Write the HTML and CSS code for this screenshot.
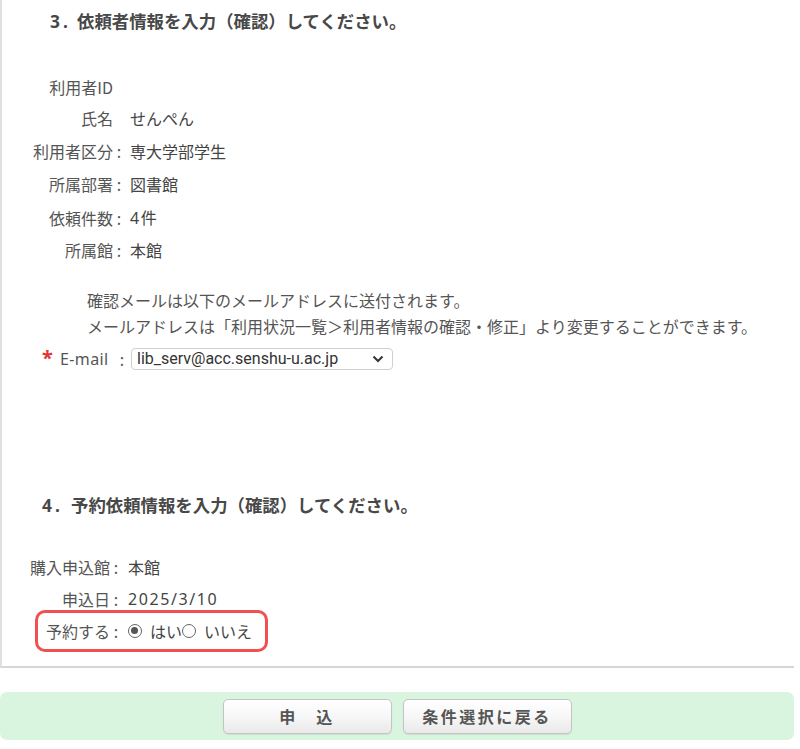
FILE: index.html
```html
<!DOCTYPE html>
<html lang="ja">
<head>
<meta charset="utf-8">
<title>予約依頼</title>
<link rel="stylesheet" href="styles.css">
</head>
<body>
<div class="panel">
  <h2 class="heading heading-3"><span class="hnum">3.</span>依頼者情報を入力（確認）してください。</h2>
  <div class="info info-3">
    <div class="row row-first"><span class="label">利用者ID</span><span class="colon"></span><span class="value"></span></div>
    <div class="row"><span class="label">氏名</span><span class="colon"></span><span class="value">せんぺん</span></div>
    <div class="row"><span class="label">利用者区分</span><span class="colon">:</span><span class="value">専大学部学生</span></div>
    <div class="row"><span class="label">所属部署</span><span class="colon">:</span><span class="value">図書館</span></div>
    <div class="row"><span class="label">依頼件数</span><span class="colon">:</span><span class="value"><span class="num">4</span>件</span></div>
    <div class="row"><span class="label">所属館</span><span class="colon">:</span><span class="value">本館</span></div>
  </div>
  <div class="notes">
    <p>確認メールは以下のメールアドレスに送付されます。</p>
    <p>メールアドレスは「利用状況一覧＞利用者情報の確認・修正」より変更することができます。</p>
  </div>
  <div class="email-row">
    <span class="req">*</span>
    <span class="email-label">E-mail</span>
    <span class="email-colon">:</span>
    <div class="select" role="listbox">
      <span class="select-text">lib_serv@acc.senshu-u.ac.jp</span>
      <svg class="chevron" width="12" height="8" viewBox="0 0 12 8"><path d="M1.5 1.5 L6 6 L10.5 1.5" fill="none" stroke="#333" stroke-width="2"/></svg>
    </div>
  </div>

  <h2 class="heading heading-4"><span class="hnum">4.</span>予約依頼情報を入力（確認）してください。</h2>
  <div class="info info-4">
    <div class="row"><span class="label">購入申込館</span><span class="colon">:</span><span class="value">本館</span></div>
    <div class="row"><span class="label">申込日</span><span class="colon">:</span><span class="value num">2025/3/10</span></div>
    <div class="row row-reserve">
      <span class="label">予約する</span><span class="colon">:</span>
      <span class="value radios">
        <span class="radio checked"></span><span class="radio-text">はい</span><span class="radio"></span><span class="radio-text">いいえ</span>
      </span>
      <span class="highlight"></span>
    </div>
  </div>
</div>
<div class="actions">
  <button class="btn" type="button">申　込</button>
  <button class="btn" type="button">条件選択に戻る</button>
</div>
</body>
</html>
```

FILE: styles.css
```css
html, body {
  margin: 0;
  padding: 0;
  background: #fff;
}
body {
  font-family: "Noto Sans CJK JP", "Noto Sans", sans-serif;
  font-size: 16px;
  color: #555;
  width: 800px;
}
.panel {
  width: 792px;
  border-left: 2px solid #e0e0e0;
  border-bottom: 2px solid #d6d6d6;
  padding-top: 9px;
  padding-bottom: 19px;
}
.heading {
  margin: 0;
  font-size: 17.4px;
  line-height: 24px;
  font-weight: bold;
  color: #484848;
}
.hnum {
  font-family: "Noto Sans", sans-serif;
  letter-spacing: 3px;
  display: inline-block;
}
.heading-3 { padding-left: 48px; }
.heading-3 .hnum { width: 27px; }
.heading-4 { padding-left: 40px; margin-top: 123px; }
.heading-4 .hnum { width: 29px; }

.info-3 { margin-top: 39px; }
.info-4 { margin-top: 34px; }

.row {
  display: grid;
  grid-template-columns: 111px 12px auto;
  height: 33px;
  line-height: 33px;
  align-items: center;
}
.row-first { height: 30px; line-height: 30px; }
.info-4 .row {
  grid-template-columns: 108px 12px auto;
  height: 32px;
  line-height: 32px;
}
.label {
  text-align: right;
  color: #555;
}
.colon {
  text-align: center;
  color: #555;
}
.value {
  padding-left: 5px;
  color: #444;
}
.info-4 .value { padding-left: 6px; }
.num {
  font-family: "Noto Sans", sans-serif;
  letter-spacing: 1.6px;
}

.notes {
  margin-top: 20px;
  padding-left: 85px;
}
.notes p {
  margin: 0;
  line-height: 26px;
  color: #555;
}

.email-row {
  display: flex;
  align-items: center;
  margin-top: 8px;
  padding-left: 40px;
  height: 23px;
}
.req {
  color: #e53333;
  font-family: "Noto Sans", sans-serif;
  font-weight: bold;
  font-size: 20px;
  line-height: 20px;
  align-self: flex-start;
  margin-top: 1px;
  width: 18px;
}
.email-label {
  font-family: "Noto Sans", sans-serif;
  font-size: 16px;
  color: #555;
  letter-spacing: 0.4px;
  width: 53px;
}
.email-colon {
  width: 18px;
  text-align: center;
  color: #555;
}
.select {
  box-sizing: border-box;
  width: 262px;
  height: 22px;
  border: 1px solid #cfcfcf;
  border-radius: 4px;
  display: flex;
  align-items: center;
  justify-content: space-between;
  padding: 0 8px 0 5px;
  background: #fff;
}
.select-text {
  font-family: Roboto, "Liberation Sans", sans-serif;
  font-size: 16px;
  color: #333;
  line-height: 20px;
}
.chevron { display: block; }

.row-reserve { position: relative; }
.radios {
  display: flex;
  align-items: center;
}
.radio {
  box-sizing: border-box;
  width: 14px;
  height: 14px;
  border: 1.5px solid #666;
  border-radius: 50%;
  display: inline-block;
  position: relative;
  margin-right: 8px;
}
.radio.checked::after {
  content: "";
  position: absolute;
  left: 2px;
  top: 2px;
  width: 7px;
  height: 7px;
  border-radius: 50%;
  background: #555;
}
.radio-text { color: #444; }
.highlight {
  position: absolute;
  left: 33px;
  top: -5px;
  width: 227px;
  height: 36px;
  border: 3px solid #f05050;
  border-radius: 10px;
  pointer-events: none;
}

.actions {
  margin-top: 24px;
  width: 794px;
  height: 48px;
  background: #d9f5df;
  border-radius: 7px;
  display: flex;
  justify-content: center;
  align-items: center;
  gap: 11px;
}
.btn {
  box-sizing: border-box;
  width: 169px;
  height: 35px;
  border: 1px solid #c4c4c4;
  border-radius: 5px;
  background: linear-gradient(#ffffff, #f7f7f7 50%, #e9e9e9);
  box-shadow: 0 1px 1px rgba(0,0,0,0.08);
  font-family: "Noto Sans CJK JP", sans-serif;
  font-size: 16px;
  font-weight: bold;
  letter-spacing: 2.5px;
  color: #555;
  padding: 0;
}
```
